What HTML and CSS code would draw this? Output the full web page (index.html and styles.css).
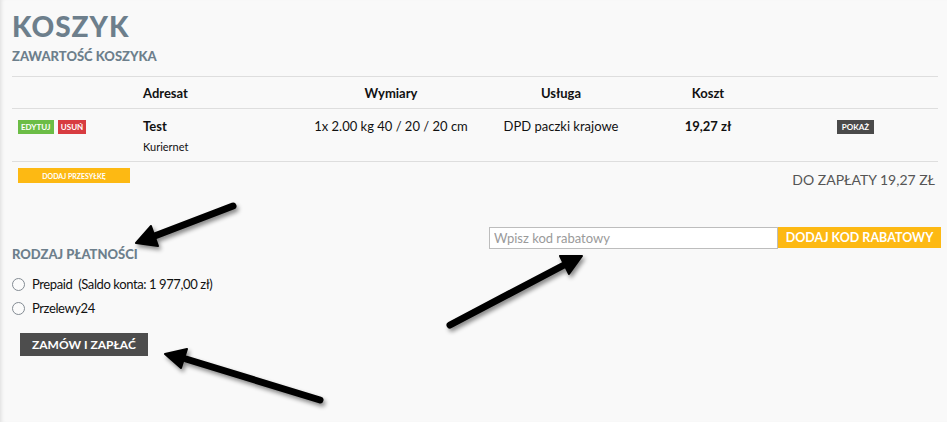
FILE: index.html
```html
<!DOCTYPE html>
<html lang="pl">
<head>
    <meta charset="UTF-8">
    <title>Koszyk</title>
    <link rel="stylesheet" href="styles.css">
</head>
<body>
    <div class="page">
        <h1 class="page-title">KOSZYK</h1>
        <h2 class="section-title">ZAWARTOŚĆ KOSZYKA</h2>

        <table class="cart">
            <colgroup>
                <col class="c-actions">
                <col class="c-recipient">
                <col class="c-size">
                <col class="c-service">
                <col class="c-cost">
                <col class="c-more">
            </colgroup>
            <thead>
                <tr>
                    <th></th>
                    <th class="left">Adresat</th>
                    <th>Wymiary</th>
                    <th>Usługa</th>
                    <th>Koszt</th>
                    <th></th>
                </tr>
            </thead>
            <tbody>
                <tr>
                    <td class="actions">
                        <span class="tag tag-green">EDYTUJ</span>
                        <span class="tag tag-red">USUŃ</span>
                    </td>
                    <td class="left">
                        <div class="name">Test</div>
                        <div class="carrier">Kuriernet</div>
                    </td>
                    <td>1x 2.00 kg 40 / 20 / 20 cm</td>
                    <td>DPD paczki krajowe</td>
                    <td class="cost">19,27 zł</td>
                    <td class="more"><span class="tag tag-dark">POKAŻ</span></td>
                </tr>
            </tbody>
        </table>

        <div class="cart-footer">
            <button class="btn-add">DODAJ PRZESYŁKĘ</button>
            <div class="total">DO ZAPŁATY 19,27 ZŁ</div>
        </div>

        <div class="checkout">
            <div class="payment">
                <h2 class="section-title">RODZAJ PŁATNOŚCI</h2>
                <label class="radio-row"><input type="radio" name="pay"> Prepaid&nbsp; (Saldo konta: 1 977,00 zł)</label>
                <label class="radio-row"><input type="radio" name="pay"> Przelewy24</label>
                <button class="btn-order">ZAMÓW I ZAPŁAĆ</button>
            </div>
            <form class="coupon">
                <input type="text" class="coupon-input" placeholder="Wpisz kod rabatowy">
                <button type="button" class="coupon-btn">DODAJ KOD RABATOWY</button>
            </form>
        </div>

        <!-- annotation arrows drawn over the page -->
        <svg class="arrows" width="947" height="422" viewBox="0 0 947 422">
            <g class="arrow">
                <line x1="233" y1="206" x2="152" y2="237"/>
                <polygon points="136,243 158,246 151,226"/>
            </g>
            <g class="arrow">
                <line x1="450" y1="325" x2="566" y2="264"/>
                <polygon points="582,256 569,274 560,256"/>
            </g>
            <g class="arrow">
                <line x1="320" y1="400" x2="186" y2="359"/>
                <polygon points="165,354 187,349 181,368"/>
            </g>
        </svg>
    </div>
</body>
</html>
```

FILE: styles.css
```css
* {
    box-sizing: border-box;
}
body {
    margin: 0;
    background: #f9f9f9;
    font-family: Lato, "Open Sans", sans-serif;
    color: #111;
}
.page {
    position: relative;
    width: 947px;
    height: 422px;
    padding: 10px 7px 0 12px;
    box-shadow: inset 4px 0 4px -3px rgba(0,0,0,0.12);
    overflow: hidden;
}
.page-title {
    margin: 0;
    font-size: 28px;
    line-height: 32px;
    font-weight: 900;
    letter-spacing: 1px;
    color: #6d7f8c;
}
.section-title {
    margin: 4px 0 0 0;
    font-size: 13px;
    line-height: 20px;
    font-weight: 900;
    color: #6d7f8c;
}
.cart {
    width: 926px;
    margin-top: 10px;
    border-collapse: collapse;
    table-layout: fixed;
    font-size: 13px;
}
.c-actions { width: 119px; }
.c-recipient { width: 160px; }
.c-size { width: 200px; }
.c-service { width: 140px; }
.c-cost { width: 154px; }
.c-more { width: 153px; }
.cart thead tr {
    border-top: 1px solid #dedede;
}
.cart tr {
    border-bottom: 1px solid #dedede;
}
.cart th {
    height: 32px;
    padding: 0;
    font-weight: 700;
    text-align: center;
}
.cart td {
    height: 53px;
    padding: 9px 0 0 0;
    vertical-align: top;
    text-align: center;
    line-height: 16px;
}
.cart .left {
    text-align: left;
    padding-left: 12px;
}
.cart td.actions {
    text-align: left;
    padding: 11px 0 0 6px;
    line-height: 14px;
}
.cart td.more {
    padding: 11px 12px 0 0;
    line-height: 14px;
}
.name {
    font-weight: 700;
    font-size: 13px;
}
.carrier {
    font-size: 11px;
    margin-top: 5px;
}
.cost {
    font-weight: 700;
}
.tag {
    display: inline-block;
    height: 14px;
    padding: 0 3px;
    font-size: 8px;
    line-height: 14px;
    font-weight: 700;
    color: #fff;
    vertical-align: top;
}
.tag-green { background: #6cbd46; }
.tag-red { background: #d83c41; margin-left: 1px; }
.tag-dark { background: #4a4a4a; padding: 0 5px; }

.cart-footer {
    display: flex;
    justify-content: space-between;
    align-items: flex-start;
    margin-top: 6px;
}
.btn-add {
    margin-left: 6px;
    width: 112px;
    height: 15px;
    padding: 0;
    border: 0;
    background: #fdb913;
    color: #fff;
    font-family: inherit;
    font-size: 7px;
    font-weight: 700;
}
.total {
    margin: 2px 5px 0 0;
    font-size: 14px;
    line-height: 20px;
    color: #555;
}

.checkout {
    display: flex;
    justify-content: space-between;
    align-items: flex-start;
    margin-top: 37px;
}
.payment {
    padding-top: 13px;
}
.radio-row {
    display: flex;
    align-items: center;
    height: 24px;
    font-size: 13px;
    letter-spacing: -0.4px;
}
.payment .section-title + .radio-row {
    margin-top: 8px;
}
.radio-row input {
    appearance: none;
    width: 13px;
    height: 13px;
    margin: 0 7px 0 0;
    border: 1.5px solid #838b93;
    border-radius: 50%;
    background: #fbfbfb;
}
.btn-order {
    display: block;
    margin: 13px 0 0 8px;
    height: 23px;
    padding: 0 12px;
    border: 0;
    background: #4d4d4d;
    color: #fff;
    font-family: inherit;
    font-size: 12px;
    font-weight: 700;
}
.coupon {
    display: flex;
    margin: 0 -1px 0 0;
}
.coupon-input {
    width: 289px;
    height: 22px;
    padding: 0 4px;
    border: 1px solid #bdbdbd;
    background: #fff;
    font-family: inherit;
    font-size: 13px;
}
.coupon-input::placeholder {
    color: #9a9a9a;
}
.coupon-btn {
    width: 163px;
    height: 21px;
    padding: 0;
    border: 0;
    background: #fdb913;
    color: #fff;
    font-family: inherit;
    font-size: 12.5px;
    font-weight: 700;
}

.arrows {
    position: absolute;
    top: 0;
    left: 0;
    pointer-events: none;
}
.arrow {
    filter: drop-shadow(2px 3px 2px rgba(0,0,0,0.45));
}
.arrow line {
    stroke: #000;
    stroke-width: 7;
    stroke-linecap: round;
}
.arrow polygon {
    fill: #000;
    stroke: #000;
    stroke-width: 2;
    stroke-linejoin: round;
}
```
